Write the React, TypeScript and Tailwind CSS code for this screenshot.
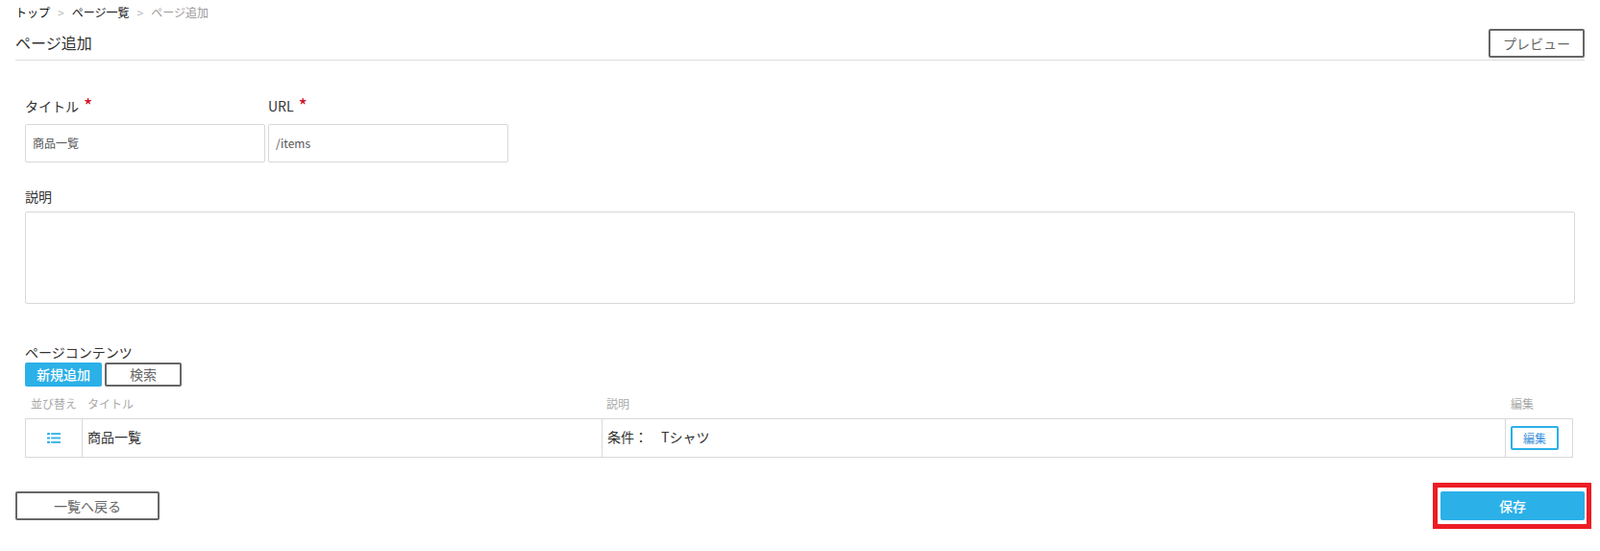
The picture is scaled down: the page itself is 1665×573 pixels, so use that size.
import React from 'react';

const font = { fontFamily: '"Noto Sans CJK JP", "Noto Sans", sans-serif' };

const ListIcon = () => (
  <svg width="14" height="11" viewBox="0 0 14 11" fill="#2bb0e8">
    <rect x="0" y="0" width="3" height="2.2" rx="0.4" />
    <rect x="4.2" y="0.2" width="9.8" height="1.8" />
    <rect x="0" y="4.4" width="3" height="2.2" rx="0.4" />
    <rect x="4.2" y="4.6" width="9.8" height="1.8" />
    <rect x="0" y="8.8" width="3" height="2.2" rx="0.4" />
    <rect x="4.2" y="9" width="9.8" height="1.8" />
  </svg>
);

const App: React.FC = () => {
  return (
    <div className="w-[1665px] h-[573px] bg-white text-[#333] overflow-hidden" style={font}>
      <div className="pl-4 pr-4 pt-[4px]">
        <div className="flex items-center h-[17px] text-[12px] leading-[17px]">
          <span className="text-[#111]">トップ</span>
          <span className="text-[#bbb] mx-2">&gt;</span>
          <span className="text-[#111]">ページ一覧</span>
          <span className="text-[#bbb] mx-2">&gt;</span>
          <span className="text-[#999]">ページ追加</span>
        </div>

        <div className="flex justify-between items-end h-[42px] border-b border-[#ddd]">
          <h1 className="text-[16px] leading-[22px] mb-[7px]">ページ追加</h1>
          <button className="w-[100px] h-[30px] mb-[2px] border-2 border-[#666] rounded-[2px] text-[14px] text-[#666] bg-white">
            プレビュー
          </button>
        </div>

        <div className="pl-[10px] pr-[10px]">
          <div className="flex gap-[3px] mt-[36px]">
            <div className="w-[250px]">
              <label className="block h-[30px] text-[14px] leading-[22px]">
                タイトル<span className="text-[#d0021b] text-[20px] leading-[20px] ml-[5px] align-[-2px]">*</span>
              </label>
              <input
                readOnly
                value="商品一覧"
                className="w-full h-[40px] border border-[#d9d9d9] rounded-[2px] px-[7px] pb-[2px] text-[12px] text-[#555]"
              />
            </div>
            <div className="w-[250px]">
              <label className="block h-[30px] text-[14px] leading-[22px]">
                URL<span className="text-[#d0021b] text-[20px] leading-[20px] ml-[5px] align-[-2px]">*</span>
              </label>
              <input
                readOnly
                value="/items"
                className="w-full h-[40px] border border-[#d9d9d9] rounded-[2px] px-[7px] pb-[2px] text-[12px] text-[#555]"
              />
            </div>
          </div>

          <label className="block mt-[25px] h-[26px] text-[14px] leading-[20px]">説明</label>
          <textarea readOnly className="block w-[1613px] h-[96px] border border-[#d9d9d9] rounded-[2px] resize-none" />

          <div className="mt-[40px] text-[14px] leading-[20px]">ページコンテンツ</div>
          <div className="flex gap-[3px] mt-px">
            <button className="w-[80px] h-[25px] bg-[#2bb0e8] rounded-[2px] text-white text-[14px] font-medium">
              新規追加
            </button>
            <button className="w-[80px] h-[25px] border-2 border-[#666] rounded-[2px] text-[#666] text-[14px] bg-white">
              検索
            </button>
          </div>

          <div className="w-[1611px] mt-[5px] flex text-[12px] leading-[26px] text-[#aaa] h-[28px]">
            <div className="w-[59px] pl-[6px]">並び替え</div>
            <div className="w-[540px] pl-[6px]">タイトル</div>
            <div className="w-[941px] pl-[6px]">説明</div>
            <div className="pl-[6px]">編集</div>
          </div>

          <div className="w-[1611px] h-[41px] flex border border-[#d9d9d9] text-[14px] text-[#333]">
            <div className="w-[59px] flex items-center justify-center border-r border-[#d9d9d9]">
              <ListIcon />
            </div>
            <div className="w-[541px] flex items-center pl-[5px] pb-[2px] border-r border-[#d9d9d9]">商品一覧</div>
            <div className="w-[940px] flex items-center pl-[5px] pb-[2px] border-r border-[#d9d9d9]">条件：　Tシャツ</div>
            <div className="flex-1 flex items-center pl-[5px]">
              <button className="w-[50px] h-[25px] border-2 border-[#2bb0e8] rounded-[2px] text-[#3f93dc] text-[12px] bg-white">
                編集
              </button>
            </div>
          </div>
        </div>

        <div className="flex justify-between items-start mt-[35px]">
          <button className="w-[150px] h-[30px] border-2 border-[#666] rounded-[2px] text-[#666] text-[14px] bg-white">
            一覧へ戻る
          </button>
          {/* red highlight drawn over the screenshot */}
          <div className="border-[5px] border-[#ed1c24] pt-[4px] pb-[4px] pl-[3px] pr-[2px] -mt-[9px] -mr-[7px]">
            <button className="block w-[150px] h-[30px] bg-[#2bb0e8] rounded-[2px] text-white text-[14px] font-medium">
              保存
            </button>
          </div>
        </div>
      </div>
    </div>
  );
};

export default App;
